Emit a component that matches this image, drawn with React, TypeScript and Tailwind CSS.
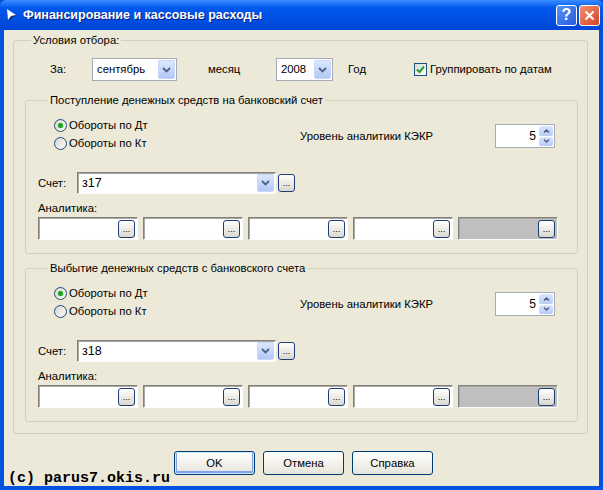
import clsx from "clsx";

function Chevron() {
  return (
    <svg width="9" height="6" viewBox="0 0 9 6">
      <path d="M1 1 L4.5 4.5 L8 1" stroke="#4D6185" strokeWidth="1.8" fill="none" />
    </svg>
  );
}

function DropButton() {
  return (
    <div className="w-[17px] my-px mr-px rounded-[2px] border border-[#C6D6FC] bg-linear-to-b from-[#DCE7FE] to-[#B3C8F5] flex items-center justify-center">
      <Chevron />
    </div>
  );
}

function DotsButton() {
  return (
    <div className="w-[17px] h-[18px] rounded-[3px] border border-[#1F3E78] bg-linear-to-b from-white to-[#DAD8CE] flex items-end justify-center text-[9px] leading-[11px] pb-[2px] text-black">
      ...
    </div>
  );
}

function XpCombo({ value, className }: { value: string; className: string }) {
  return (
    <div className={clsx("h-[23px] border border-[#A5ACB5] bg-white flex items-stretch", className)}>
      <div className="flex-1 flex items-center pl-[4px]">{value}</div>
      <DropButton />
    </div>
  );
}

function Field({ gray }: { gray?: boolean }) {
  return (
    <div
      className={clsx(
        "w-[100px] h-[23px] border border-t-[#808080] border-l-[#808080] border-b-[#FDFDFB] border-r-[#FDFDFB] shadow-[inset_1px_1px_0_#A9A79E] flex items-center justify-end pr-[2px]",
        gray ? "bg-[#BFBFBF]" : "bg-white"
      )}
    >
      <DotsButton />
    </div>
  );
}

function Radio({ checked }: { checked?: boolean }) {
  return (
    <span className="w-[13px] h-[13px] rounded-full border border-[#1C5180] bg-linear-to-br from-[#D6D4CC] to-white flex items-center justify-center">
      {checked && <span className="w-[5px] h-[5px] rounded-full bg-[#21A121] shadow-[0_0_1px_#5DD35D]" />}
    </span>
  );
}

function Spin() {
  return (
    <div className="w-[60px] h-[24px] border border-[#A5ACB5] bg-white flex items-stretch">
      <div className="flex-1 flex items-center justify-end pr-[3px] text-[12px]">5</div>
      <div className="w-[15px] flex flex-col gap-px py-px pr-px">
        <div className="flex-1 rounded-[2px] bg-linear-to-b from-[#DCE7FE] to-[#B7CBF6] flex items-center justify-center">
          <svg width="7" height="4" viewBox="0 0 7 4">
            <path d="M1 3.5 L3.5 1 L6 3.5" stroke="#4D6185" strokeWidth="1.5" fill="none" />
          </svg>
        </div>
        <div className="flex-1 rounded-[2px] bg-linear-to-b from-[#DCE7FE] to-[#B7CBF6] flex items-center justify-center">
          <svg width="7" height="4" viewBox="0 0 7 4">
            <path d="M1 0.5 L3.5 3 L6 0.5" stroke="#4D6185" strokeWidth="1.5" fill="none" />
          </svg>
        </div>
      </div>
    </div>
  );
}

function MoneyGroup({ title, account, className }: { title: string; account: string; className: string }) {
  return (
    <fieldset className={clsx("w-[553px] ml-[11px] border border-[#D0D0BF] rounded-[3px]", className)}>
      <legend className="ml-[22px] px-[2px] leading-[14px]">{title}</legend>

      <div className="flex mt-[9px]">
        <div className="ml-[28px] w-[246px] flex flex-col">
          <label className="h-[18px] flex items-center gap-[2px]">
            <Radio checked />
            <span>Обороты по Дт</span>
          </label>
          <label className="h-[18px] flex items-center gap-[2px]">
            <Radio />
            <span>Обороты по Кт</span>
          </label>
        </div>
        <div className="mt-[8px] h-[24px] flex items-center">
          <span className="w-[195px]">Уровень аналитики КЭКР</span>
          <Spin />
        </div>
      </div>

      <div className="mt-[20px] ml-[12px] h-[22px] flex items-center">
        <span className="w-[39px]">Счет:</span>
        <div className="w-[199px] h-[22px] border border-t-[#808080] border-l-[#808080] border-b-[#FDFDFB] border-r-[#FDFDFB] shadow-[inset_1px_1px_0_#A9A79E] bg-white flex items-stretch">
          <div className="flex-1 flex items-center pl-[4px] text-[12.5px]">{account}</div>
          <DropButton />
        </div>
        <div className="ml-[2px]">
          <DotsButton />
        </div>
      </div>

      <div className="mt-[7px] ml-[12px] leading-[14px]">Аналитика:</div>

      <div className="mt-[2px] ml-[12px] mb-[13px] flex gap-[5px]">
        <Field />
        <Field />
        <Field />
        <Field />
        <Field gray />
      </div>
    </fieldset>
  );
}

function XpButton({ label, isDefault }: { label: string; isDefault?: boolean }) {
  return (
    <button
      className={clsx(
        "w-[81px] h-[24px] rounded-[3px] border border-[#003C74] bg-linear-to-b from-white to-[#E6E4DA]",
        isDefault && "shadow-[inset_0_0_0_1px_#CEE7FF,inset_0_-1px_0_2px_#7FA3E8]"
      )}
    >
      {label}
    </button>
  );
}

export default function App() {
  return (
    <div className="relative w-[603px] h-[490px] flex flex-col bg-[#0053E0] font-['Liberation_Sans',Arial,sans-serif] text-[11.3px] text-black">
      {/* Title bar */}
      <div className="h-[30px] flex items-center rounded-t-[6px] bg-linear-to-b from-[#3A8CFF] via-[#0058EE] via-25% to-[#0046D6]">
        <svg className="ml-[5px]" width="13" height="14" viewBox="0 0 13 14">
          <polygon points="3,2 12,8 7,9 4,13" fill="#1A2C60" />
          <polygon points="2,1 11,7 6,8 3,12" fill="#FFFFFF" />
        </svg>
        <span className="ml-[5px] text-white font-bold text-[12.5px] [text-shadow:1px_1px_0_#0A1E80]">
          Финансирование и кассовые расходы
        </span>
        <div className="ml-auto mr-[3px] flex gap-[2px]">
          <div className="w-[21px] h-[21px] rounded-[3px] border border-white bg-linear-to-br from-[#5C93F7] to-[#2259DE] flex items-center justify-center text-white font-bold text-[16px] leading-none">
            ?
          </div>
          <div className="w-[21px] h-[21px] rounded-[3px] border border-white bg-linear-to-br from-[#F08F6E] to-[#D7411C] flex items-center justify-center">
            <svg width="11" height="11" viewBox="0 0 11 11">
              <path d="M1.5 1.5 L9.5 9.5 M9.5 1.5 L1.5 9.5" stroke="white" strokeWidth="2" />
            </svg>
          </div>
        </div>
      </div>

      {/* Client area */}
      <div className="flex-1 mx-[4px] mb-[4px] bg-[#ECE9D8] flex flex-col">
        <fieldset className="mt-[3px] ml-[9px] w-[575px] border border-[#D0D0BF] rounded-[3px]">
          <legend className="ml-[17px] px-[2px] leading-[14px]">Условия отбора:</legend>

          <div className="mt-[11px] h-[23px] flex items-center">
            <span className="ml-[36px] w-[42px]">За:</span>
            <XpCombo value="сентябрь" className="w-[85px]" />
            <span className="ml-[31px] w-[68px]">месяц</span>
            <XpCombo value="2008" className="w-[57px]" />
            <span className="ml-[15px] w-[66px]">Год</span>
            <span className="w-[13px] h-[13px] border border-[#1C5180] bg-linear-to-br from-[#DCDBD5] to-white flex items-center justify-center">
              <svg width="9" height="9" viewBox="0 0 9 9">
                <path d="M1 4.5 L3.5 7 L8 1.5" stroke="#21A121" strokeWidth="2" fill="none" />
              </svg>
            </span>
            <span className="ml-[3px]">Группировать по датам</span>
          </div>

          <MoneyGroup
            title="Поступление денежных средств на банковский счет"
            account="з17"
            className="mt-[12px]"
          />
          <MoneyGroup
            title="Выбытие денежных средств с банковского счета"
            account="з18"
            className="mt-[7px] mb-[11px]"
          />
        </fieldset>

        <div className="mt-[17px] ml-[170px] flex gap-[8px]">
          <XpButton label="OK" isDefault />
          <XpButton label="Отмена" />
          <XpButton label="Справка" />
        </div>
      </div>

      {/* watermark */}
      <div className="absolute left-[8px] top-[470px] font-['Liberation_Mono',monospace] font-bold text-[15px] leading-[18px] text-black">
        (c) parus7.okis.ru
      </div>
    </div>
  );
}
